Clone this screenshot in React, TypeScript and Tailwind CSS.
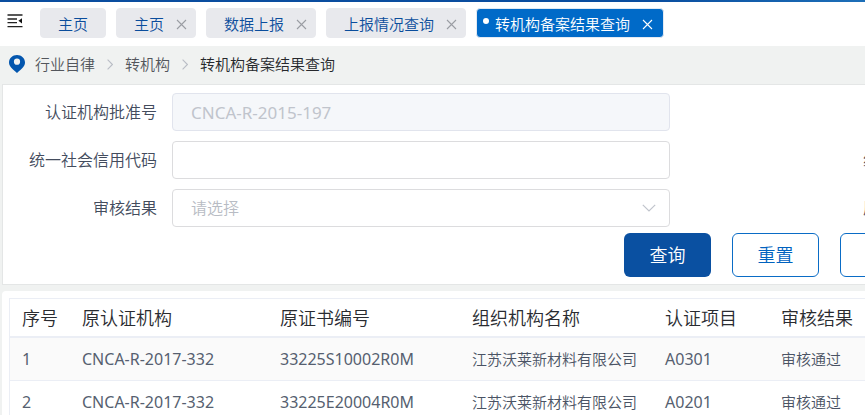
import { useState } from "react"
import clsx from "clsx"

type Tab = {
  id: string
  title: string
  closable: boolean
}

type ResultRow = {
  no: number
  agency: string
  cert: string
  org: string
  project: string
  result: string
}

const initialTabs: Tab[] = [
  { id: "home", title: "主页", closable: false },
  { id: "home-2", title: "主页", closable: true },
  { id: "report", title: "数据上报", closable: true },
  { id: "report-query", title: "上报情况查询", closable: true },
  { id: "transfer-result", title: "转机构备案结果查询", closable: true },
]

const columns = ["序号", "原认证机构", "原证书编号", "组织机构名称", "认证项目", "审核结果"]

const rows: ResultRow[] = [
  {
    no: 1,
    agency: "CNCA-R-2017-332",
    cert: "33225S10002R0M",
    org: "江苏沃莱新材料有限公司",
    project: "A0301",
    result: "审核通过",
  },
  {
    no: 2,
    agency: "CNCA-R-2017-332",
    cert: "33225E20004R0M",
    org: "江苏沃莱新材料有限公司",
    project: "A0201",
    result: "审核通过",
  },
]

function FoldIcon() {
  return (
    <svg width="16" height="14" viewBox="0 0 16 14" fill="none" stroke="#222" strokeWidth="1.3">
      <path d="M0.5 1H15.5M0.5 5H10M0.5 8.7H10M0.5 12.6H15.5" />
      <path d="M15 4.2V9.4L11.4 6.8Z" fill="#111" stroke="none" />
    </svg>
  )
}

function CloseIcon() {
  return (
    <svg width="11" height="11" viewBox="0 0 11 11" fill="none" stroke="currentColor" strokeWidth="1.1">
      <path d="M1 1L10 10M10 1L1 10" />
    </svg>
  )
}

function PinIcon() {
  return (
    <svg width="16" height="18" viewBox="0 0 16 18">
      <path
        fill="#0356ae"
        fillRule="evenodd"
        d="M8 0C3.5 0 0 3.3 0 7.5C0 11.8 3.6 13.8 8 18C12.4 13.8 16 11.8 16 7.5C16 3.3 12.5 0 8 0ZM8 3.6A3.1 3.1 0 1 1 8 9.8A3.1 3.1 0 1 1 8 3.6Z"
      />
    </svg>
  )
}

function Separator() {
  return (
    <svg width="6" height="11" viewBox="0 0 6 11" fill="none" stroke="#b9bdc5" strokeWidth="1.1" className="mx-3">
      <path d="M0.6 0.6L5.4 5.5L0.6 10.4" />
    </svg>
  )
}

function TabBar() {
  const [tabs, setTabs] = useState(initialTabs)
  const [active, setActive] = useState("transfer-result")

  return (
    <header className="flex h-11 shrink-0 items-start bg-white pt-1.5">
      <button type="button" aria-label="折叠菜单" className="mt-1.5 mr-[17px] ml-[7px] shrink-0">
        <FoldIcon />
      </button>
      <nav className="flex gap-2.5">
        {tabs.map((tab) => {
          const isActive = tab.id === active
          return (
            <div
              key={tab.id}
              className={clsx(
                "flex h-[30px] shrink-0 items-center rounded border text-[15px]",
                isActive
                  ? "border-[#e3eaf3] bg-[#006ac8] pr-2.5 pl-[6px] text-white"
                  : "border-[#e8e9ed] bg-[#e8e9ed] pl-[17px] text-[#0a4d9c]",
                !isActive && (tab.closable ? "pr-2" : "pr-[17px]"),
              )}
            >
              {isActive && <span className="mr-1.5 mb-1 h-1.5 w-1.5 rounded-full bg-white" />}
              <button type="button" onClick={() => setActive(tab.id)} className="pt-0.5 whitespace-nowrap">
                {tab.title}
              </button>
              {tab.closable && (
                <button
                  type="button"
                  aria-label="关闭"
                  onClick={() => setTabs(tabs.filter((t) => t.id !== tab.id))}
                  className={clsx("ml-3 pt-0.5", isActive ? "text-white" : "text-[#9a9da3]")}
                >
                  <CloseIcon />
                </button>
              )}
            </div>
          )
        })}
      </nav>
    </header>
  )
}

function Breadcrumb() {
  return (
    <nav className="flex h-[38px] shrink-0 items-center pb-0.5 pl-[9px] text-[15px] text-[#53565c]">
      <span className="mr-2.5">
        <PinIcon />
      </span>
      <a href="#industry">行业自律</a>
      <Separator />
      <a href="#transfer">转机构</a>
      <Separator />
      <span className="text-[#26282c]">转机构备案结果查询</span>
    </nav>
  )
}

const labelClass = "w-[154px] shrink-0 text-right"
const fieldClass = "h-[38px] w-full rounded border outline-none"
const sideLabelClass = "ml-[193px] w-16 shrink-0 whitespace-nowrap"

function SearchForm() {
  const [code, setCode] = useState("")
  const [result, setResult] = useState("")

  return (
    <section className="ml-0.5 shrink-0 overflow-hidden border border-r-0 border-[#e4e6e6] bg-white pt-2 pb-[7px]">
      {/* the form is wider than the card, the rest is cut off on the right */}
      <form className="-mr-[62px] text-base text-[#434c5d]" onSubmit={(e) => e.preventDefault()}>
        <div className="flex flex-col gap-2.5">
          <div className="flex items-center">
            <label htmlFor="agency" className={labelClass}>
              认证机构批准号
            </label>
            <div className="ml-[15px] flex-1">
              <input
                id="agency"
                disabled
                value="CNCA-R-2015-197"
                className={clsx(
                  fieldClass,
                  "border-[#e1e4ed] bg-[#f5f7fa] px-[18px] text-[17px] font-normal text-[#c0c4cc]",
                )}
              />
            </div>
            <span className={sideLabelClass} />
          </div>
          <div className="flex items-center">
            <label htmlFor="code" className={labelClass}>
              统一社会信用代码
            </label>
            <div className="ml-[15px] flex-1">
              <input
                id="code"
                value={code}
                onChange={(e) => setCode(e.target.value)}
                className={clsx(fieldClass, "border-[#dcdcde] bg-white px-[18px] text-[17px]")}
              />
            </div>
            <span className={sideLabelClass}>组织机构名称</span>
          </div>
          <div className="flex items-center">
            <label htmlFor="result" className={labelClass}>
              审核结果
            </label>
            <div className="relative ml-[15px] flex-1">
              <select
                id="result"
                value={result}
                onChange={(e) => setResult(e.target.value)}
                className={clsx(
                  fieldClass,
                  "appearance-none border-[#dcdcde] bg-white px-[18px] text-base",
                  !result && "text-[#b8bcc4]",
                )}
              >
                <option value="">请选择</option>
                <option value="pass">审核通过</option>
              </select>
              <svg
                width="14"
                height="8"
                viewBox="0 0 14 8"
                fill="none"
                stroke="#c0c4cc"
                strokeWidth="1.2"
                className="pointer-events-none absolute top-[15px] right-3.5"
              >
                <path d="M0.8 0.8L7 7L13.2 0.8" />
              </svg>
            </div>
            <span className={sideLabelClass}>原证书编号</span>
          </div>
        </div>
        <div className="mt-1.5 flex justify-end gap-[21px] text-lg">
          <button type="submit" className="h-11 w-[87px] rounded-md bg-[#0a50a1] text-white">
            查询
          </button>
          <button type="reset" className="h-11 w-[87px] rounded-md border border-[#0a6cc6] text-[#0062bf]">
            重置
          </button>
          <button type="button" aria-label="导出" className="h-11 w-[87px] rounded-md border border-[#0a6cc6]" />
        </div>
      </form>
    </section>
  )
}

const textCell = "border-b border-[#ebeef5] pl-3 text-[15px] text-[#4a5364]"
const codeCell = "border-b border-[#ebeef5] pl-3 text-base font-normal text-[#565f70]"

function ResultTable() {
  return (
    <section className="mt-1.5 ml-0.5 flex-1 rounded-tl bg-white pt-[7px] pl-[7px]">
      <table className="w-full table-fixed border-separate border-spacing-0 border-t border-l border-[#ebeef5] text-left whitespace-nowrap">
        <colgroup>
          <col className="w-[60px]" />
          <col className="w-[198px]" />
          <col className="w-[192px]" />
          <col />
          <col className="w-[116px]" />
          <col className="w-24" />
        </colgroup>
        <thead>
          <tr className="h-[39px] text-lg text-[#292b30]">
            {columns.map((name) => (
              <th key={name} className="border-b-2 border-[#ebeef5] pl-3 font-[350]">
                {name}
              </th>
            ))}
          </tr>
        </thead>
        <tbody>
          {rows.map((row) => (
            <tr key={row.no} className="h-[43px] odd:bg-[#fafafa]">
              <td className={codeCell}>{row.no}</td>
              <td className={codeCell}>{row.agency}</td>
              <td className={codeCell}>{row.cert}</td>
              <td className={textCell}>{row.org}</td>
              <td className={codeCell}>{row.project}</td>
              <td className={textCell}>{row.result}</td>
            </tr>
          ))}
        </tbody>
      </table>
    </section>
  )
}

export default function App() {
  return (
    <div className="flex h-screen flex-col overflow-hidden bg-[#f0f2f1] font-['Noto_Sans','Noto_Sans_CJK_SC',sans-serif] font-[350]">
      <div className="h-0.5 shrink-0 bg-linear-to-r from-[#0a4d9f] from-75% to-[#1d6fb8]" />
      <TabBar />
      <Breadcrumb />
      <SearchForm />
      <ResultTable />
    </div>
  )
}
